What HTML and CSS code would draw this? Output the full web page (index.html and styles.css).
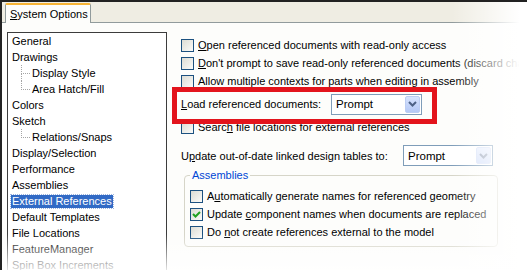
FILE: index.html
```html
<!DOCTYPE html>
<html lang="en">

<head>
    <meta charset="UTF-8">
    <title>System Options - External References</title>
    <link rel="stylesheet" href="styles.css">
</head>

<body>
    <div class="window">
        <div class="tabs">
            <div class="tab"><u>S</u>ystem Options</div>
            <div class="tab-strip"></div>
        </div>

        <div class="panel">
            <div class="tree">
                <div class="node"><span>General</span></div>
                <div class="node"><span>Drawings</span></div>
                <div class="node child"><span>Display Style</span></div>
                <div class="node child last"><span>Area Hatch/Fill</span></div>
                <div class="node"><span>Colors</span></div>
                <div class="node"><span>Sketch</span></div>
                <div class="node child last"><span>Relations/Snaps</span></div>
                <div class="node"><span>Display/Selection</span></div>
                <div class="node"><span>Performance</span></div>
                <div class="node"><span>Assemblies</span></div>
                <div class="node selected"><span>External References</span></div>
                <div class="node"><span>Default Templates</span></div>
                <div class="node"><span>File Locations</span></div>
                <div class="node"><span>FeatureManager</span></div>
                <div class="node"><span>Spin Box Increments</span></div>
            </div>

            <div class="options">
                <label class="check-row"><span class="box"></span><span><u>O</u>pen referenced documents with read-only access</span></label>
                <label class="check-row"><span class="box"></span><span><u>D</u>on't prompt to save read-only referenced documents (discard char</span></label>
                <label class="check-row"><span class="box"></span><span>Allow multiple contexts for parts when editing in assembly</span></label>

                <div class="combo-row load-row">
                    <span class="combo-label load-label"><u>L</u>oad referenced documents:</span>
                    <div class="combo load-combo">
                        <span>Prompt</span>
                        <span class="drop">
                            <svg width="9" height="6" viewBox="0 0 9 6"><polyline points="1,1 4.5,4.5 8,1" fill="none" stroke="#4d6185" stroke-width="2"/></svg>
                        </span>
                    </div>
                    <div class="highlight"></div>
                </div>

                <label class="check-row"><span class="box"></span><span>Searc<u>h</u> file locations for external references</span></label>

                <div class="combo-row update-row">
                    <span class="combo-label update-label">U<u>p</u>date out-of-date linked design tables to:</span>
                    <div class="combo update-combo">
                        <span>Prompt</span>
                        <span class="drop">
                            <svg width="9" height="6" viewBox="0 0 9 6"><polyline points="1,1 4.5,4.5 8,1" fill="none" stroke="#4d6185" stroke-width="2"/></svg>
                        </span>
                    </div>
                </div>

                <fieldset class="group">
                    <legend>Assemblies</legend>
                    <label class="check-row"><span class="box"></span><span>A<u>u</u>tomatically generate names for referenced geometry</span></label>
                    <label class="check-row"><span class="box checked">
                        <svg width="11" height="11" viewBox="0 0 11 11"><polyline points="2,5 4.5,7.5 9,3" fill="none" stroke="#21a121" stroke-width="2"/></svg>
                    </span><span>Update <u>c</u>omponent names when documents are replaced</span></label>
                    <label class="check-row"><span class="box"></span><span>Do <u>n</u>ot create references external to the model</span></label>
                </fieldset>
            </div>
        </div>

        <div class="fade-right"></div>
        <div class="fade-bottom"></div>
    </div>
</body>

</html>
```

FILE: styles.css
```css
body {
    margin: 0;
    background: #fff;
    font-family: "Liberation Sans", Arial, sans-serif;
    font-size: 11px;
    color: #000;
    overflow: hidden;
}

.window {
    position: relative;
    width: 527px;
    height: 270px;
    border-top: 2px solid #222;
    border-left: 2px solid #222;
    box-sizing: border-box;
    background: #fdfdfb;
    overflow: hidden;
}

/* tab strip */
.tabs {
    display: flex;
    height: 20px;
    background: #efede3;
    border-bottom: 1px solid #919b9c;
}

.tab {
    width: 86px;
    margin-left: 3px;
    margin-top: 1px;
    height: 20px;
    box-sizing: border-box;
    padding-left: 4px;
    line-height: 18px;
    background: #fdfdfb;
    border: 1px solid #919b9c;
    border-top: 2px solid #f7b436;
    border-bottom: none;
    border-radius: 2px 2px 0 0;
    white-space: nowrap;
}

.tab-strip {
    flex: 1;
}

.panel {
    display: flex;
    padding: 9px 0 0 5px;
}

/* tree */
.tree {
    width: 160px;
    height: 260px;
    flex-shrink: 0;
    box-sizing: border-box;
    border: 1px solid #3c3c3c;
    background: #fff;
}

.node {
    position: relative;
    height: 16px;
    display: flex;
    align-items: center;
    padding-left: 3px;
    white-space: nowrap;
}

.node span {
    line-height: 13px;
    padding: 0 1px;
}

.node.child {
    padding-left: 23px;
}

.node.child::before {
    content: '';
    position: absolute;
    left: 13px;
    top: 0;
    width: 8px;
    height: 8px;
    border-left: 1px dotted #a5a5a5;
    border-bottom: 1px dotted #a5a5a5;
}

.node.child:not(.last)::after {
    content: '';
    position: absolute;
    left: 13px;
    top: 8px;
    height: 8px;
    border-left: 1px dotted #a5a5a5;
}

.node.selected span {
    background: #316ac5;
    color: #fff;
    outline: 1px dotted #9db5e0;
}

/* options column */
.options {
    margin-left: 14px;
    padding-top: 4px;
    display: flex;
    flex-direction: column;
    min-width: 0;
}

.check-row {
    display: flex;
    align-items: center;
    height: 18px;
    white-space: nowrap;
}

.box {
    width: 13px;
    height: 13px;
    box-sizing: border-box;
    border: 1px solid #1c5180;
    background: linear-gradient(135deg, #dcdcd4, #fbfbf9);
    margin-right: 4px;
    flex-shrink: 0;
    display: flex;
    align-items: center;
    justify-content: center;
}

.combo-row {
    display: flex;
    align-items: center;
    white-space: nowrap;
}

.load-row {
    position: relative;
    height: 28px;
}

.load-label {
    width: 150px;
}

.update-row {
    margin-top: 9px;
    height: 21px;
}

.update-label {
    width: 222px;
}

.combo {
    display: flex;
    align-items: center;
    justify-content: space-between;
    height: 21px;
    box-sizing: border-box;
    border: 1px solid #7f9db9;
    background: #fff;
    padding: 1px 1px 1px 4px;
    font-size: 11.5px;
}

.load-combo {
    width: 91px;
}

.update-combo {
    width: 90px;
}

.drop {
    width: 15px;
    height: 17px;
    border-radius: 2px;
    background: linear-gradient(#d7e3fd, #b4c8f6);
    border: 1px solid #bccdf3;
    box-sizing: border-box;
    display: flex;
    align-items: center;
    justify-content: center;
}

.update-combo .drop {
    opacity: 0.55;
}

/* red annotation around the load setting */
.highlight {
    position: absolute;
    left: -9px;
    top: -3px;
    width: 265px;
    height: 37px;
    box-sizing: border-box;
    border: 5px solid #e3141c;
}

.group {
    margin: 3px 0 0 3px;
    width: 314px;
    box-sizing: border-box;
    padding: 5px 0 5px 5px;
    border: 1px solid #d6d5c8;
    border-radius: 4px;
}

.group legend {
    padding: 0 2px;
    color: #0046d5;
    line-height: 13px;
}

/* screenshot fades */
.fade-right {
    position: absolute;
    top: 0;
    right: 0;
    width: 75px;
    height: 100%;
    background: linear-gradient(to right, rgba(255, 255, 255, 0), #fff 90%);
}

.fade-bottom {
    position: absolute;
    left: 0;
    bottom: 0;
    width: 100%;
    height: 36px;
    background: linear-gradient(rgba(255, 255, 255, 0), rgba(255, 255, 255, 0.85));
}
```
